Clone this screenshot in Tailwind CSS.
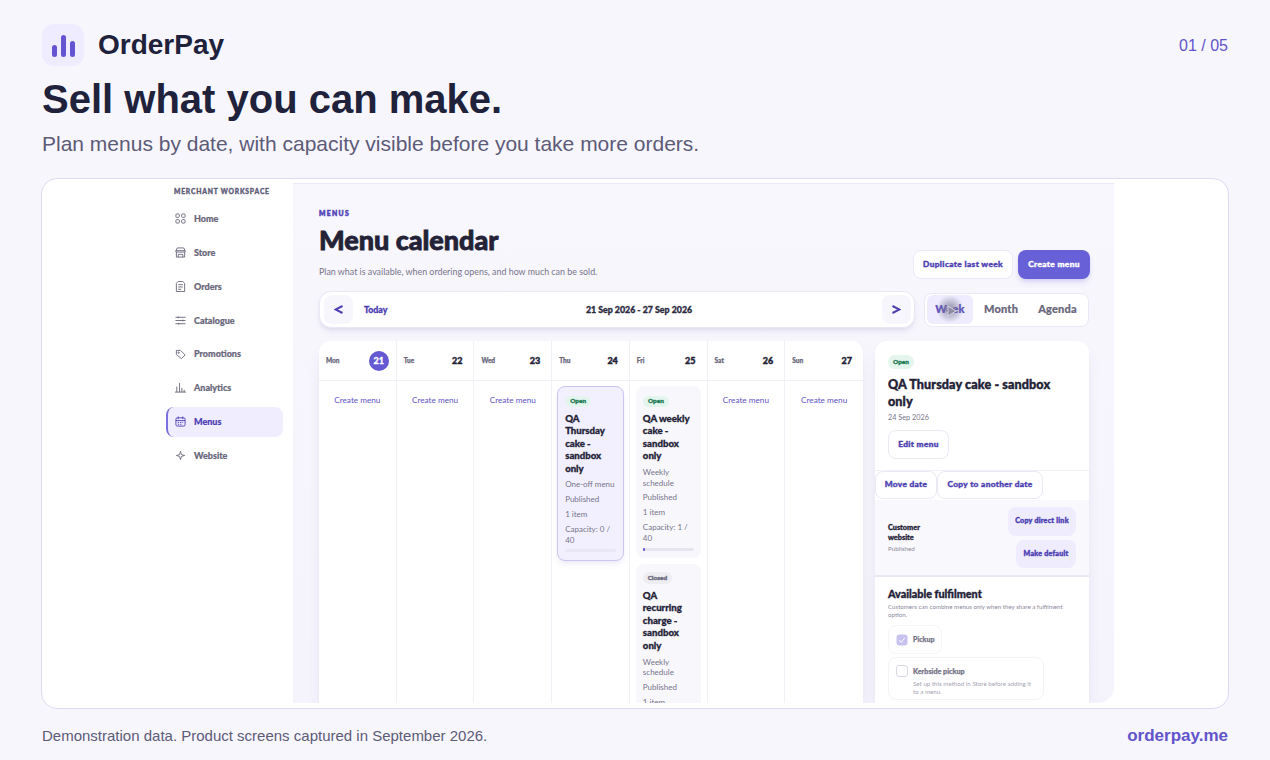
<!DOCTYPE html>
<html lang="en">
<head>
  <meta charset="UTF-8">
  <meta name="viewport" content="width=device-width, initial-scale=1.0">
  <title>OrderPay - Sell what you can make</title>
  <script src="https://cdn.jsdelivr.net/npm/@tailwindcss/browser@4"></script>
</head>
<body class="w-[1270px] h-[760px] overflow-hidden bg-[#f7f6fc] font-['Liberation_Sans',Arial,sans-serif]">

  <!-- Slide header -->
  <header class="h-[178px] px-[42px] pt-6">
    <div class="flex items-center justify-between h-[42px]">
      <div class="flex items-center gap-3.5">
        <svg class="size-[42px]" viewBox="0 0 42 42">
          <rect width="42" height="42" rx="12" fill="#eeecfe"/>
          <g fill="#6554d2">
            <rect x="10" y="21" width="5" height="12" rx="2.5"/>
            <rect x="19" y="11" width="5" height="22" rx="2.5"/>
            <rect x="28" y="17" width="5" height="16" rx="2.5"/>
          </g>
        </svg>
        <span class="text-[28px] leading-[42px] font-bold text-[#20223c]">OrderPay</span>
      </div>
      <span class="pt-0.5 text-base text-[#6254cc]">01 / 05</span>
    </div>
    <h1 class="mt-2 pt-px text-[40px] leading-[49px] font-bold text-[#20223c] whitespace-nowrap">Sell what you can make.</h1>
    <p class="mt-1.5 text-[21px] leading-7 text-[#5c5b78]">Plan menus by date, with capacity visible before you take more orders.</p>
  </header>

  <!-- Product screen -->
  <main class="mx-[41px] h-[531px] rounded-2xl border border-[#dddbf3] bg-white pt-1 pl-[114px] font-[Lato,sans-serif]">
    <div class="flex w-[958px] h-[520px] overflow-hidden">

      <!-- Sidebar -->
      <aside class="w-[137px] shrink-0 pl-2.5">
        <div class="mt-1 pl-2 text-[6.7px] leading-[9px] font-black tracking-[0.82px] text-[#5f5d7a] [-webkit-text-stroke:0.35px] whitespace-nowrap">MERCHANT WORKSPACE</div>
        <nav class="mt-2 w-[117px] flex flex-col gap-1 text-[9px] font-black text-[#6a687c] [-webkit-text-stroke:0.2px]">
          <a class="flex items-center gap-2 h-[29.8px] pl-[9px]">
            <svg class="size-[11px]" viewBox="0 0 24 24" fill="none" stroke="currentColor" stroke-width="2"><rect x="2" y="2" width="7.5" height="7.5" rx="2"/><rect x="14.5" y="2" width="7.5" height="7.5" rx="2"/><rect x="2" y="14.5" width="7.5" height="7.5" rx="2"/><rect x="14.5" y="14.5" width="7.5" height="7.5" rx="2"/></svg>
            Home
          </a>
          <a class="flex items-center gap-2 h-[29.8px] pl-[9px]">
            <svg class="size-[11px]" viewBox="0 0 24 24" fill="none" stroke="currentColor" stroke-width="2" stroke-linejoin="round"><path d="M5 2h14l3 6v3H2V8zM3 11v11h18V11M2 8h20M7 22v-6h10v6"/></svg>
            Store
          </a>
          <a class="flex items-center gap-2 h-[29.8px] pl-[9px]">
            <svg class="size-[11px]" viewBox="0 0 24 24" fill="none" stroke="currentColor" stroke-width="2" stroke-linejoin="round"><path d="M7 1h10l4 4v18H3V5zM7 8h10M7 13h10M7 18h7"/></svg>
            Orders
          </a>
          <a class="flex items-center gap-2 h-[29.8px] pl-[9px]">
            <svg class="size-[11px]" viewBox="0 0 24 24" fill="none" stroke="currentColor" stroke-width="2"><path d="M1 5h22M1 12h22M1 19h22M7 3v4M17 10v4M8 17v4"/></svg>
            Catalogue
          </a>
          <a class="flex items-center gap-2 h-[29.8px] pl-[9px]">
            <svg class="size-[11px]" viewBox="0 0 24 24" fill="none" stroke="currentColor" stroke-width="2" stroke-linejoin="round"><path d="M3 3h9l10 10-8 8L3 12z"/><circle cx="8" cy="8" r="1.6"/></svg>
            Promotions
          </a>
          <a class="flex items-center gap-2 h-[29.8px] pl-[9px]">
            <svg class="size-[11px]" viewBox="0 0 24 24" fill="none" stroke="currentColor" stroke-width="2"><path d="M0 22h24M4 22V10M10 22V2M15 22v-9M20 22v-5"/></svg>
            Analytics
          </a>
          <a class="flex items-center gap-2 h-[29.8px] pl-[7px] rounded-lg border-l-2 border-[#7a70de] bg-[#f0eefe] text-[#4f3fb4]">
            <svg class="size-[11px]" viewBox="0 0 24 24" fill="none" stroke="currentColor" stroke-width="2"><rect x="2" y="4" width="20" height="18" rx="3"/><path d="M2 10h20M7 1v6M17 1v6M6 14h3M11 14h3M16 14h2M6 18h3M11 18h3"/></svg>
            Menus
          </a>
          <a class="flex items-center gap-2 h-[29.8px] pl-[9px]">
            <svg class="size-[11px]" viewBox="0 0 24 24" fill="none" stroke="currentColor" stroke-width="2" stroke-linejoin="round"><path d="M12 3l2 7 7 2-7 2-2 7-2-7-7-2 7-2z"/></svg>
            Website
          </a>
        </nav>
      </aside>

      <!-- Content -->
      <section class="w-[821px] shrink-0 rounded-br-2xl border-t border-[#ebe9f5] bg-linear-to-b from-[#f8f7fd] to-[#f5f3fc] pl-[26px] pr-[25px]">
        <div class="flex justify-between h-[107px]">
          <div class="pt-6 whitespace-nowrap">
            <div class="text-[6.8px] leading-[10px] font-black tracking-[1.3px] text-[#5143b8] [-webkit-text-stroke:0.5px]">MENUS</div>
            <h2 class="mt-[6px] text-[27px] leading-8 font-black tracking-[-0.02px] text-[#232236] [-webkit-text-stroke:0.8px]">Menu calendar</h2>
            <p class="mt-[10px] text-[8.9px] leading-3 text-[#77758a]">Plan what is available, when ordering opens, and how much can be sold.</p>
          </div>
          <div class="flex gap-[5px] pt-[66px] -mr-px text-[8.3px] font-black tracking-[0.38px] [-webkit-text-stroke:0.4px] whitespace-nowrap">
            <div class="flex items-center justify-center w-[100px] h-[29px] rounded-lg border border-[#ebe9f6] bg-white text-[#4d3fb2]">Duplicate last week</div>
            <div class="flex items-center justify-center w-[72px] h-[29px] rounded-lg bg-[#6860d6] text-white shadow-md shadow-[#6860d6]/20">Create menu</div>
          </div>
        </div>

        <div class="flex items-center justify-between h-[37px]">
          <div class="flex items-center w-[596px] h-[37px] pl-1 pr-[3px] rounded-xl border border-[#eae8f4] bg-white shadow-md shadow-[#4a4090]/10 text-[8.8px] font-black [-webkit-text-stroke:0.3px]">
            <span class="flex items-center justify-center size-[29px] rounded-lg bg-[#f7f6fc]"><svg class="w-[9px] h-[9px]" viewBox="0 0 9 9" fill="none" stroke="#4d3fb2" stroke-width="2"><path d="M8.5 1 1.5 4.5l7 3.5"/></svg></span>
            <span class="ml-[11px] w-[25px] text-[#4d3fb2]">Today</span>
            <span class="flex-1 pl-[7px] text-center whitespace-nowrap text-[#2a293d]">21 Sep 2026 - 27 Sep 2026</span>
            <span class="flex items-center justify-center size-[29px] rounded-lg bg-[#f7f6fc]"><svg class="w-[9px] h-[9px]" viewBox="0 0 9 9" fill="none" stroke="#4d3fb2" stroke-width="2"><path d="M.5 1l7 3.5-7 3.5"/></svg></span>
          </div>
          <div class="flex items-center w-[165px] h-[34px] pl-[2px] rounded-lg border border-[#ebe9f6] bg-white text-[11px] font-black tracking-[0.2px] text-[#6a687c] [-webkit-text-stroke:0.2px]">
            <div class="relative flex items-center justify-center w-[46px] h-[29px] rounded-md bg-[#eeecfe] text-[#5b4fc0]">
              Week
              <!-- pointer tap -->
              <span class="absolute left-[9px] top-0 size-7 rounded-full bg-radial from-[#77758f]/80 to-[#77758f]/0 to-70%"></span>
              <svg class="absolute left-[19px] top-[10px] size-3" viewBox="0 0 12 12" fill="#8d8ba0" stroke="#d8d6e8" stroke-width="1"><path d="M2 1l8 5-8 5z"/></svg>
            </div>
            <div class="w-[56px] text-center">Month</div>
            <div class="w-[57px] text-center">Agenda</div>
          </div>
        </div>

        <div class="flex justify-between mt-[13px] h-[362px]">

          <!-- Week grid -->
          <div class="grid grid-cols-7 w-[544px] rounded-t-xl bg-white divide-x divide-[#f1f0f7] shadow-lg shadow-[#4a4090]/10 text-[9px]">
            <div>
              <div class="flex items-center justify-between h-10 pl-[7px] pr-[7px] border-b border-[#f1f0f7]"><span class="text-[6.5px] font-black text-[#6a687c] [-webkit-text-stroke:0.25px]">Mon</span><span class="flex items-center justify-center size-5 rounded-full bg-[#6459d2] font-black text-white [-webkit-text-stroke:0.3px]">21</span></div>
              <div class="mt-[14px] text-center text-[8.2px] leading-[10px] text-[#6254c4]">Create menu</div>
            </div>
            <div>
              <div class="flex items-center justify-between h-10 pl-[7px] pr-[11px] border-b border-[#f1f0f7]"><span class="text-[6.5px] font-black text-[#6a687c] [-webkit-text-stroke:0.25px]">Tue</span><span class="font-black text-[#232236] [-webkit-text-stroke:0.4px]">22</span></div>
              <div class="mt-[14px] text-center text-[8.2px] leading-[10px] text-[#6254c4]">Create menu</div>
            </div>
            <div>
              <div class="flex items-center justify-between h-10 pl-[7px] pr-[11px] border-b border-[#f1f0f7]"><span class="text-[6.5px] font-black text-[#6a687c] [-webkit-text-stroke:0.25px]">Wed</span><span class="font-black text-[#232236] [-webkit-text-stroke:0.4px]">23</span></div>
              <div class="mt-[14px] text-center text-[8.2px] leading-[10px] text-[#6254c4]">Create menu</div>
            </div>
            <div>
              <div class="flex items-center justify-between h-10 pl-[7px] pr-[11px] border-b border-[#f1f0f7]"><span class="text-[6.5px] font-black text-[#6a687c] [-webkit-text-stroke:0.25px]">Thu</span><span class="font-black text-[#232236] [-webkit-text-stroke:0.4px]">24</span></div>
              <div class="mt-[5px] ml-[5px] w-[67px] h-[175px] pt-[9px] pl-[7px] rounded-lg border border-[#cbc6ef] bg-[#f2f0fe] shadow-md shadow-[#6860d6]/10 text-[8px] leading-[10.5px] text-[#77758a] whitespace-nowrap">
                <div class="flex items-center justify-center w-[26px] h-[11px] rounded-full bg-[#e4f5ee] text-[6.4px] font-black text-[#1c7a52] [-webkit-text-stroke:0.35px]">Open</div>
                <div class="mt-[6px] text-[9.6px] leading-[12.4px] font-black text-[#232236] [-webkit-text-stroke:0.3px]">QA<br>Thursday<br>cake -<br>sandbox<br>only</div>
                <div class="mt-[4px]">One-off menu</div>
                <div class="mt-[4.5px]">Published</div>
                <div class="mt-[4.5px]">1 item</div>
                <div class="mt-[4.5px]">Capacity: 0 /<br>40</div>
                <div class="mt-1 w-[51px] h-[3px] rounded-full bg-[#e9e7f6]"></div>
              </div>
            </div>
            <div>
              <div class="flex items-center justify-between h-10 pl-[7px] pr-[11px] border-b border-[#f1f0f7]"><span class="text-[6.5px] font-black text-[#6a687c] [-webkit-text-stroke:0.25px]">Fri</span><span class="font-black text-[#232236] [-webkit-text-stroke:0.4px]">25</span></div>
              <div class="mt-[5px] ml-[6px] w-[65px] h-[172px] pt-[10px] pl-[7px] rounded-lg bg-[#f8f7fc] text-[8px] leading-[10.5px] text-[#77758a] whitespace-nowrap">
                <div class="flex items-center justify-center w-[26px] h-[11px] rounded-full bg-[#e4f5ee] text-[6.4px] font-black text-[#1c7a52] [-webkit-text-stroke:0.35px]">Open</div>
                <div class="mt-[6px] text-[9.6px] leading-[12.4px] font-black text-[#232236] [-webkit-text-stroke:0.3px]">QA weekly<br>cake -<br>sandbox<br>only</div>
                <div class="mt-[4.5px]">Weekly<br>schedule</div>
                <div class="mt-[4px]">Published</div>
                <div class="mt-[4.5px]">1 item</div>
                <div class="mt-[4.5px]">Capacity: 1 /<br>40</div>
                <div class="mt-[5px] w-[51px] h-[3px] rounded-full bg-[#e6e4ef]"><div class="w-[2px] h-[3px] rounded-full bg-[#6459d2]"></div></div>
              </div>
              <div class="mt-[6px] ml-[6px] w-[65px] h-[139px] pt-[8px] pl-[7px] rounded-t-lg bg-[#f8f7fc] text-[8px] leading-[10.5px] text-[#77758a] whitespace-nowrap">
                <div class="flex items-center justify-center w-[29px] h-[12px] rounded-full bg-[#ededf2] text-[6.4px] font-black text-[#6a687c] [-webkit-text-stroke:0.35px]">Closed</div>
                <div class="mt-[6px] text-[9.6px] leading-[12.4px] font-black text-[#232236] [-webkit-text-stroke:0.3px]">QA<br>recurring<br>charge -<br>sandbox<br>only</div>
                <div class="mt-[4.5px]">Weekly<br>schedule</div>
                <div class="mt-[4.5px]">Published</div>
                <div class="mt-[4.5px]">1 item</div>
              </div>
            </div>
            <div>
              <div class="flex items-center justify-between h-10 pl-[7px] pr-[11px] border-b border-[#f1f0f7]"><span class="text-[6.5px] font-black text-[#6a687c] [-webkit-text-stroke:0.25px]">Sat</span><span class="font-black text-[#232236] [-webkit-text-stroke:0.4px]">26</span></div>
              <div class="mt-[14px] text-center text-[8.2px] leading-[10px] text-[#6254c4]">Create menu</div>
            </div>
            <div>
              <div class="flex items-center justify-between h-10 pl-[7px] pr-[11px] border-b border-[#f1f0f7]"><span class="text-[6.5px] font-black text-[#6a687c] [-webkit-text-stroke:0.25px]">Sun</span><span class="font-black text-[#232236] [-webkit-text-stroke:0.4px]">27</span></div>
              <div class="mt-[14px] text-center text-[8.2px] leading-[10px] text-[#6254c4]">Create menu</div>
            </div>
          </div>

          <!-- Selected menu -->
          <div class="w-[214px] rounded-t-xl bg-white shadow-lg shadow-[#4a4090]/10 whitespace-nowrap">
            <div class="h-[129px] pt-[14px] pl-[13px]">
              <div class="flex items-center justify-center w-[26px] h-[14px] rounded-full bg-[#e4f5ee] text-[6.4px] font-black text-[#1c7a52] [-webkit-text-stroke:0.35px]">Open</div>
              <h3 class="mt-[7px] text-[12.6px] leading-[17px] font-black tracking-[0.1px] text-[#232236] [-webkit-text-stroke:0.4px]">QA Thursday cake - sandbox<br>only</h3>
              <div class="mt-[3px] text-[7.3px] leading-[10px] text-[#77758a]">24 Sep 2026</div>
              <div class="mt-[7px] flex items-center justify-center w-[61px] h-[29px] pb-px rounded-lg border border-[#ebe9f3] text-[8.3px] font-black tracking-[0.35px] text-[#4d3fb2] [-webkit-text-stroke:0.4px]">Edit menu</div>
            </div>
            <div class="flex h-[30px] border-t border-[#f1f0f7] text-[8.3px] font-black tracking-[0.35px] text-[#4d3fb2] [-webkit-text-stroke:0.4px]">
              <div class="flex items-center justify-center w-[62px] h-[28px] pb-px rounded-lg border border-[#ebe9f3]">Move date</div>
              <div class="flex items-center justify-center w-[106px] h-[28px] pb-px rounded-lg border border-[#ebe9f3]">Copy to another date</div>
            </div>
            <div class="flex items-center justify-between h-[77px] pl-[13px] pr-[13px] border-b-2 border-[#eae8f2] bg-[#f9f8fd]">
              <div class="pt-px text-[7.3px] leading-[10px] font-black text-[#232236] [-webkit-text-stroke:0.3px]">Customer<br>website<div class="mt-[1px] text-[6.3px] leading-[9px] font-normal text-[#8b899b] [-webkit-text-stroke:0]">Published</div></div>
              <div class="flex flex-col items-end gap-1 text-[7.1px] font-black tracking-[0.25px] text-[#4d3fb2] [-webkit-text-stroke:0.4px]">
                <div class="flex items-center justify-center w-[68px] h-[29px] rounded-lg bg-[#eeecfd]">Copy direct link</div>
                <div class="flex items-center justify-center w-[60px] h-[28px] rounded-lg bg-[#eeecfd]">Make default</div>
              </div>
            </div>
            <div class="pt-[9px] pl-[13px]">
              <h3 class="text-[10.8px] leading-[15px] font-black text-[#232236] [-webkit-text-stroke:0.35px]">Available fulfilment</h3>
              <p class="mt-[2px] text-[6.15px] leading-2 text-[#8b899b]">Customers can combine menus only when they share a fulfilment<br>option.</p>
              <div class="mt-[6px] flex items-center gap-[5px] w-[54px] h-[29px] pl-[7px] rounded-lg border border-[#f6f5fa] text-[7px] font-black text-[#77758a] [-webkit-text-stroke:0.25px]">
                <svg class="size-3 shrink-0" viewBox="0 0 12 12" fill="none"><rect x=".5" y=".5" width="11" height="11" rx="3" fill="#c8c2f0"/><path d="M3.2 6.2l2 2 3.6-4.2" stroke="#fff"/></svg>
                Pickup
              </div>
              <div class="mt-[3px] flex gap-[5px] w-[156px] h-[43px] pt-[7px] pl-[7px] rounded-lg border border-[#f4f3f8]">
                <span class="size-3 shrink-0 rounded-[3px] border border-[#d9d7e4]"></span>
                <div class="text-[6.2px] leading-2 text-[#a5a3b2]">
                  <div class="mt-[2px] mb-[4px] text-[7.2px] leading-[9px] font-black text-[#77758a] [-webkit-text-stroke:0.25px]">Kerbside pickup</div>
                  Set up this method in Store before adding it<br>to a menu.
                </div>
              </div>
            </div>
          </div>
        </div>
      </section>
    </div>
  </main>

  <!-- Slide footer -->
  <footer class="flex items-center justify-between px-[42px] pt-[3px] h-[51px]">
    <span class="text-[15px] text-[#5c5b78]">Demonstration data. Product screens captured in September 2026.</span>
    <span class="text-[17px] font-bold text-[#6254cc]">orderpay.me</span>
  </footer>
</body>
</html>
